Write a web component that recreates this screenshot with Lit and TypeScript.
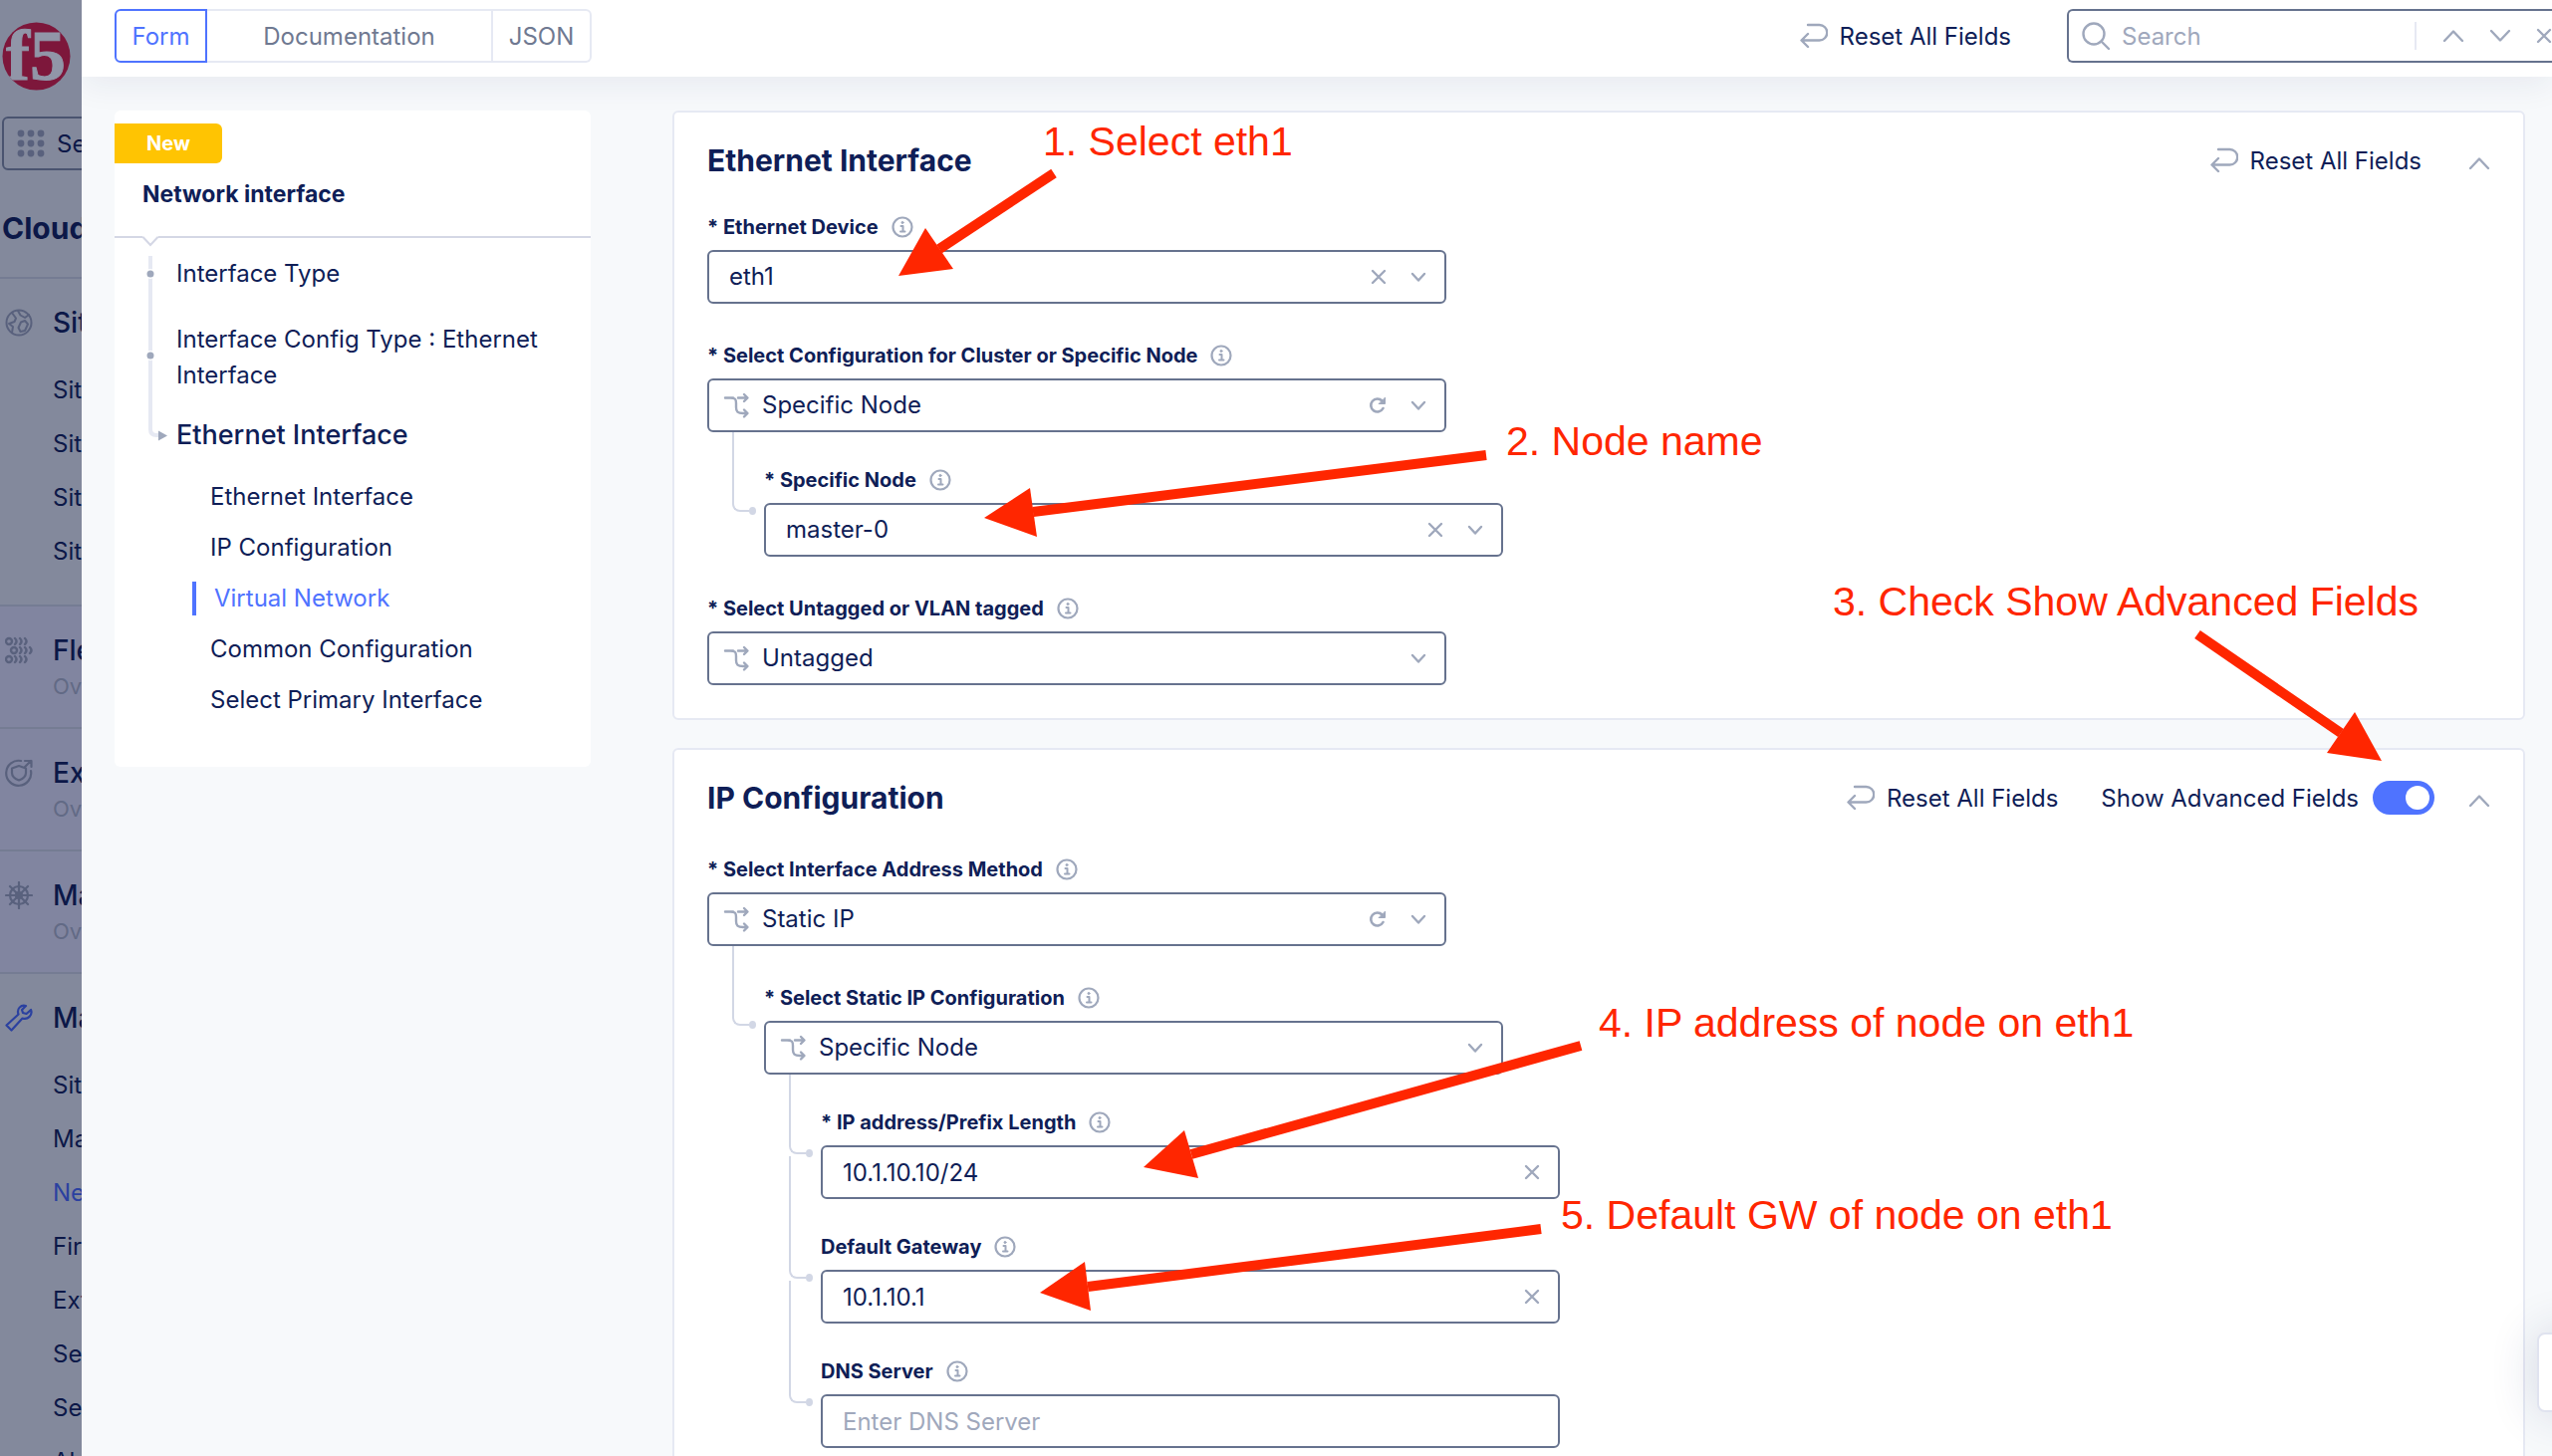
import { LitElement, html, css, svg, nothing } from "lit";
import { customElement, property } from "lit/decorators.js";
import { classMap } from "lit/directives/class-map.js";

const stroke = (size: number, body: unknown, width = 2) => html`<svg
  class="icon"
  width=${size}
  height=${size}
  viewBox="0 0 ${size} ${size}"
  fill="none"
  stroke="currentColor"
  stroke-width=${width}
  stroke-linecap="round"
  stroke-linejoin="round"
  aria-hidden="true"
>${body}</svg>`;

const icons = {
  reset: stroke(28, svg`<path d="M8 3h11.5a7.500 7.500 0 0 1 0 15.500H2M8 12L1.500 18.500L8 25"/>`, 2.4),
  search: stroke(30, svg`<circle cx="13" cy="13" r="10.500"/><path d="M20.500 20.500L28 28"/>`, 2.4),
  up: stroke(22, svg`<path d="M2 16L11 6.500L20 16"/>`, 2.4),
  down: stroke(22, svg`<path d="M2 6L11 15.500L20 6"/>`, 2.4),
  caret: stroke(16, svg`<path d="M2 5L8 11.500L14 5"/>`, 2.4),
  close: stroke(16, svg`<path d="M2 2L14 14M14 2L2 14"/>`, 2.4),
  branch: stroke(28, svg`<path d="M2 6.500H10M15 6.500H24M21 3L24.500 6.500L21 10M7 6.500C12.500 6.500 13 8 13 12V16C13 20.500 14.500 22 20 22H24M21 18.500L24.500 22L21 25.500"/>`, 2.4),
  refresh: stroke(18, svg`<path d="M14.500 12A6.500 6.500 0 1 1 13.500 4.500"/><path d="M16.500 1.500V7.500H10.500Z" fill="currentColor" stroke-width="1"/>`, 2.6),
  info: stroke(22, svg`<circle cx="11" cy="11" r="9.500"/><path d="M9.500 10H11.500V15.500M9 15.500H13.500" stroke-width="2"/><circle cx="11" cy="6.500" r="1" fill="currentColor" stroke-width="1"/>`, 2.2),
  apps: html`<svg class="icon" width="28" height="28" viewBox="0 0 28 28" fill="currentColor" aria-hidden="true">${[4, 14, 24].map((y) => [4, 14, 24].map((x) => svg`<circle cx=${x} cy=${y} r="3.400"/>`))}</svg>`,
  globe: stroke(28, svg`<circle cx="14" cy="14" r="12.500"/><path d="M7 4L11 9.500L9.500 13L4 15L8 18L7 24M13 2L15.500 6.500L20 9L24 6M16 13.500L20 12L23 15.500L20 22L15.500 23L13.500 19Z"/>`),
  fleet: stroke(28, svg`<circle cx="4" cy="5" r="3"/><circle cx="9" cy="14" r="3"/><circle cx="4" cy="23" r="3"/><path d="M10 2q3 3 0 6M15 2q3 3 0 6M20 2q3 3 0 6M15 11q3 3 0 6M20 11q3 3 0 6M25 11q3 3 0 6M10 20q3 3 0 6M15 20q3 3 0 6M20 20q3 3 0 6"/>`, 2.4),
  shield: stroke(28, svg`<path d="M16 2A12.500 12.500 0 1 0 26 12M20 2H26.500V8M26 2L20 8M14 7L21 9.500V14C21 18 18 20 14 21.500C10 20 7 18 7 14V9.500Z"/>`, 2.2),
  helm: stroke(28, svg`<circle cx="14" cy="14" r="9"/><circle cx="14" cy="14" r="3"/><path d="M14 1V27M1 14H27M5 5L23 23M23 5L5 23"/>`, 2.2),
  wrench: stroke(28, svg`<path d="M26 6L21.500 10L18 9L17 6L21 2C16 .500 11.500 5 13.500 10.500L1.500 21.500L6.500 26.500L17.500 14.500C23 16.500 28 11 26 6Z"/>`, 2.2),
};

const base = css`
  :host { box-sizing: border-box; }
  *, *::before, *::after { box-sizing: border-box; }
  svg.icon { display: block; flex: none; }
  button, input, select { font: inherit; color: inherit; background: none; border: 0; padding: 0; margin: 0; }
  button { display: flex; align-items: center; cursor: pointer; }
`;

@customElement("form-field")
class FormField extends LitElement {
  @property() label = "";
  @property() value = "";
  @property() hint = "";
  @property() kind: "select" | "choice" | "text" = "text";
  @property() action: "clear" | "refresh" | "" = "";

  static styles = [base, css`
    :host { display: block; width: 742px; }
    .head { display: flex; align-items: center; gap: 13px; height: 30px; margin-bottom: 8px; }
    label { font-size: 20px; font-weight: 700; line-height: 30px; color: #0f1e57; white-space: nowrap; }
    .head button, .box button, .caret { color: #9fa8bc; }
    .box { display: flex; align-items: center; height: 54px; border: 2px solid #66728e; border-radius: 6px; padding: 0 18px 0 20px; background: #fff; }
    .box.choice { padding-left: 14px; gap: 11px; }
    .box .icon { color: #9fa8bc; }
    select, input { flex: 1; min-width: 0; height: 50px; font-size: 24px; line-height: 32px; color: #0f1e57; appearance: none; outline: none; }
    input::placeholder { color: #a0a8bc; opacity: 1; }
    .tools { display: flex; align-items: center; gap: 24px; }
  `];

  render() {
    const control = this.kind === "text"
      ? html`<input id="control" type="text" .value=${this.value} placeholder=${this.hint} />`
      : html`<select id="control"><option>${this.value}</option></select>`;
    return html`
      <div class="head">
        <label for="control">${this.label}</label>
        <button type="button" aria-label="Info">${icons.info}</button>
      </div>
      <div class=${classMap({ box: true, choice: this.kind === "choice" })}>
        ${this.kind === "choice" ? icons.branch : nothing}
        ${control}
        <div class="tools">
          ${this.action === "clear" ? html`<button type="button" aria-label="Clear">${icons.close}</button>` : nothing}
          ${this.action === "refresh" ? html`<button type="button" aria-label="Restore">${icons.refresh}</button>` : nothing}
          ${this.kind === "text" ? nothing : html`<span class="caret">${icons.caret}</span>`}
        </div>
      </div>
    `;
  }
}

interface MenuGroup { title: string; icon: unknown; note?: string; items?: string[]; active?: boolean; }

const menu: MenuGroup[] = [
  { title: "Sites", icon: icons.globe, items: ["Sites", "Sites", "Sites", "Sites"] },
  { title: "Fleet", icon: icons.fleet, note: "Over" },
  { title: "Ext", icon: icons.shield, note: "Over" },
  { title: "Man", icon: icons.helm, note: "Over" },
  { title: "Man", icon: icons.wrench, active: true, items: ["Site", "Man", "Net", "Fire", "Ext", "Sec", "Sec", "Alert"] },
];

@customElement("side-menu")
class SideMenu extends LitElement {
  static styles = [base, css`
    :host { display: block; overflow: hidden; background: #83899c; color: #0c1848; white-space: nowrap; }
    .logo { display: block; margin: 22px 0 0 2px; }
    .service { display: flex; gap: 12px; height: 54px; width: 240px; margin: 26px 0 0 2px; padding-left: 13px; border: 2px solid #4a5470; border-radius: 6px; font-size: 24px; }
    .service .icon { color: #59617d; }
    h2 { margin: 38px 0 0 2px; height: 69px; font-size: 30px; font-weight: 700; line-height: 40px; color: #0c1848; }
    .group { border-top: 2px solid #757c93; padding: 26px 0 0 5px; height: 123px; }
    .group.plain { background: #8185a0; }
    .group.open { height: auto; padding-bottom: 26px; }
    .title { display: flex; align-items: center; gap: 20px; height: 36px; font-size: 28px; font-weight: 500; }
    .title .icon { color: #59617d; }
    .active .title .icon { color: #2b41a0; }
    .note { margin-left: 48px; font-size: 22px; line-height: 36px; color: #626a85; }
    ul { list-style: none; margin: 23px 0 0 48px; padding: 0; }
    li { height: 54px; }
    a { color: inherit; text-decoration: none; font-size: 24px; line-height: 54px; }
    a.current { color: #2b41a0; }
  `];

  render() {
    return html`
      <svg class="logo" width="69" height="69" viewBox="0 0 69 69" role="img" aria-label="f5">
        <defs><clipPath id="disc"><circle cx="34.500" cy="34.500" r="34"/></clipPath></defs>
        <circle cx="34.500" cy="34.500" r="34" fill="#7d173b"/>
        <g clip-path="url(#disc)">
          <text x="4" y="58" font-family="Liberation Serif, serif" font-weight="700" font-size="72" fill="#9196a8" stroke="#9196a8">f5</text>
        </g>
      </svg>
      <button type="button" class="service">${icons.apps}<span>Sel</span></button>
      <h2>Cloud</h2>
      <nav>
        ${menu.map((g) => html`
          <section class=${classMap({ group: true, open: !!g.items, plain: !g.items, active: !!g.active })}>
            <div class="title">${g.icon}<span>${g.title}</span></div>
            ${g.note ? html`<div class="note">${g.note}</div>` : nothing}
            ${g.items ? html`<ul>${g.items.map((i) => html`<li><a href="#" class=${i === "Net" ? "current" : ""}>${i}</a></li>`)}</ul>` : nothing}
          </section>`)}
      </nav>
    `;
  }
}

@customElement("form-outline")
class FormOutline extends LitElement {
  static styles = [base, css`
    :host { display: block; background: #fff; border-radius: 6px; color: #0f1e57; padding: 13px 0 50px; }
    .badge { display: inline-block; height: 40px; padding: 0 32px; border-radius: 0 6px 6px 0; background: #ffc402; color: #fff; font-size: 20px; font-weight: 700; line-height: 40px; vertical-align: top; }
    h2 { margin: 0; padding: 14px 28px 26px; border-bottom: 2px solid #d4d7e5; font-size: 23px; font-weight: 700; line-height: 34px; height: 75px; }
    .notch { display: block; margin: -2px 0 0 27px; }
    a { color: inherit; text-decoration: none; }
    .steps { display: flex; padding-left: 28px; }
    .rail { flex: none; width: 34px; }
    .list { display: flex; flex-direction: column; font-size: 24px; line-height: 36px; }
    .list > a { padding-right: 40px; margin-bottom: 30px; }
    .list > a.current { font-size: 27px; font-weight: 500; line-height: 40px; margin: -8px 0 25px; padding: 0; }
    .subs { display: flex; flex-direction: column; margin-left: 16px; }
    .subs a { line-height: 34px; margin-bottom: 17px; padding-left: 18px; }
    .subs a:last-child { margin: 0; }
    .subs a.on { color: #4f73ff; border-left: 4px solid #4f73ff; }
  `];

  render() {
    return html`
      <span class="badge">New</span>
      <h2>Network interface</h2>
      <svg class="notch" width="18" height="20" viewBox="0 0 18 20" aria-hidden="true">
        <path d="M1 0H17L9 9Z" fill="#fff"/><path d="M1.500 1L9 9L16.500 1" fill="none" stroke="#d4d7e5" stroke-width="2"/>
      </svg>
      <nav class="steps">
        <svg class="rail" width="34" height="190" viewBox="0 0 34 190" aria-hidden="true">
          <path d="M8 0V174Q8 180 14 180H18" fill="none" stroke="#e6e9f3" stroke-width="4"/>
          <circle cx="8" cy="18" r="5" fill="#fff"/><circle cx="8" cy="18" r="3.500" fill="#9fa8bc"/>
          <circle cx="8" cy="100" r="5" fill="#fff"/><circle cx="8" cy="100" r="3.500" fill="#9fa8bc"/>
          <path d="M16 175.500L25 180.500L16 185.500Z" fill="#9fa8bc"/>
        </svg>
        <div class="list">
          <a href="#">Interface Type</a>
          <a href="#">Interface Config Type : Ethernet Interface</a>
          <a href="#" class="current">Ethernet Interface</a>
          <div class="subs">
            <a href="#">Ethernet Interface</a>
            <a href="#">IP Configuration</a>
            <a href="#" class="on">Virtual Network</a>
            <a href="#">Common Configuration</a>
            <a href="#">Select Primary Interface</a>
          </div>
        </div>
      </nav>
    `;
  }
}

const notes = [
  { text: "1. Select eth1", x: 1047, y: 156, from: [1058, 174], tip: [902, 277], neck: [943, 250], head: [[929, 229], [957, 270]] },
  { text: "2. Node name", x: 1512, y: 457, from: [1492, 457], tip: [988, 520], neck: [1037, 514], head: [[1034, 490], [1041, 539]] },
  { text: "3. Check Show Advanced Fields", x: 1840, y: 618, from: [2206, 637], tip: [2391, 764], neck: [2350, 736], head: [[2364, 715], [2336, 756]] },
  { text: "4. IP address of node on eth1", x: 1605, y: 1041, from: [1587, 1050], tip: [1148, 1172], neck: [1196, 1159], head: [[1189, 1135], [1203, 1183]] },
  { text: "5. Default GW of node on eth1", x: 1567, y: 1234, from: [1547, 1234], tip: [1044, 1298], neck: [1092, 1292], head: [[1089, 1267], [1095, 1316]] },
];

@customElement("app-root")
class AppRoot extends LitElement {
  static styles = [base, css`
    :host { display: grid; grid-template-columns: 82px minmax(0, 1fr); height: 100vh; overflow: hidden; position: relative; font-family: Inter, "Liberation Sans", sans-serif; font-size: 24px; color: #0f1e57; background: #f7f9fb; }
    .panel { display: flex; flex-direction: column; min-width: 0; min-height: 0; overflow: hidden; }
    header { flex: none; position: relative; z-index: 1; display: flex; align-items: center; height: 77px; padding: 0 0 5px 33px; background: #fff; box-shadow: 0 8px 32px rgba(30, 45, 100, 0.07); }
    .tabs { display: flex; margin-right: auto; }
    .tabs button { height: 54px; justify-content: center; border: 2px solid #e6e9f3; border-left-width: 0; color: #6f7991; }
    .tabs .form { width: 93px; border: 2px solid #4f73ff; border-radius: 6px 0 0 6px; color: #4f73ff; }
    .tabs .docs { width: 287px; }
    .tabs .json { width: 99px; border-radius: 0 6px 6px 0; }
    .reset { gap: 12px; white-space: nowrap; }
    .reset .icon, .fold { color: #9fa8bc; }
    .search { display: flex; align-items: center; flex: none; width: 487px; height: 54px; margin-left: 56px; padding-left: 12px; border: 2px solid #66728e; border-right: 0; border-radius: 6px 0 0 6px; color: #9fa8bc; }
    .search input { width: 292px; margin-left: 11px; margin-right: auto; outline: none; color: #0f1e57; }
    .search input::placeholder { color: #a0a8bc; opacity: 1; }
    .moves { display: flex; flex: none; align-items: center; gap: 25px; height: 28px; padding-left: 26px; border-left: 2px solid #e6e9f3; }
    .body { display: flex; align-items: flex-start; gap: 82px; padding: 34px 27px 0 33px; }
    form-outline { flex: none; width: 478px; }
    .cards { flex: 1; min-width: 0; display: flex; flex-direction: column; gap: 28px; }
    .card { background: #fff; border: 2px solid #e6e9f3; border-radius: 6px; padding: 29px 33px 33px; }
    .top { display: flex; align-items: center; height: 38px; margin-bottom: 33px; }
    .top.wide { margin-bottom: 38px; }
    h3 { margin: 0 auto 0 0; font-size: 30px; font-weight: 700; line-height: 38px; }
    .fold { margin-left: 47px; padding-top: 6px; }
    .switch { display: flex; align-items: center; gap: 14px; margin-left: 43px; white-space: nowrap; }
    .switch + .fold { margin-left: 34px; }
    .switch input { appearance: none; display: flex; align-items: center; justify-content: flex-end; width: 62px; height: 34px; padding: 5px; border-radius: 17px; background: #4f73ff; }
    .switch input::before { content: ""; width: 24px; height: 24px; border-radius: 50%; background: #fff; }
    .switch input:not(:checked) { background: #9fa8bc; justify-content: flex-start; }
    .next { margin-top: 37px; }
    .nested { display: flex; align-items: stretch; padding-left: 25px; }
    .elbow { flex: none; width: 17px; margin-bottom: 45px; border: solid #d2d7e5; border-width: 0 0 2px 2px; border-bottom-left-radius: 8px; }
    .dot { flex: none; align-self: flex-end; width: 7px; height: 8px; margin: 0 8px 42px 0; border-radius: 50%; background: #d2d7e5; }
    .nested form-field { margin-top: 33px; }
    .nested.loose form-field { margin-top: 37px; }
    .nested.loose .elbow { margin-bottom: 49px; }
    .nested.loose .dot { margin-bottom: 46px; }
    .nested.again .elbow { margin-top: -43px; }
    .level { padding-left: 57px; }
    .helper { position: absolute; right: -60px; top: 1338px; width: 75px; height: 80px; border: 2px solid #e0e3ef; border-radius: 8px; background: #fff; box-shadow: 0 0 48px rgba(30, 45, 100, 0.16); z-index: 2; }
    .notes { position: absolute; inset: 0; width: 100%; height: 100%; z-index: 3; pointer-events: none; fill: #ff2600; font-family: "Liberation Sans", Arial, sans-serif; font-size: 41px; }
    .notes line { stroke: #ff2600; stroke-width: 10px; }
  `];

  private resetButton() {
    return html`<button type="button" class="reset">${icons.reset}<span>Reset All Fields</span></button>`;
  }

  private foldButton() {
    return html`<button type="button" class="fold" aria-label="Collapse section">${icons.up}</button>`;
  }

  private nested(field: unknown, mode: "" | "loose" | "again" = "") {
    return html`<div class="nested ${mode}"><i class="elbow"></i><i class="dot"></i>${field}</div>`;
  }

  render() {
    return html`
      <side-menu></side-menu>
      <div class="panel">
        <header>
          <div class="tabs">
            <button type="button" class="form">Form</button>
            <button type="button" class="docs">Documentation</button>
            <button type="button" class="json">JSON</button>
          </div>
          ${this.resetButton()}
          <div class="search">
            ${icons.search}
            <input type="text" placeholder="Search" aria-label="Search" />
            <div class="moves">
              <button type="button" aria-label="Previous match">${icons.up}</button>
              <button type="button" aria-label="Next match">${icons.down}</button>
              <button type="button" aria-label="Close search">${icons.close}</button>
            </div>
          </div>
        </header>
        <div class="body">
          <form-outline></form-outline>
          <form class="cards">
            <section class="card">
              <div class="top"><h3>Ethernet Interface</h3>${this.resetButton()}${this.foldButton()}</div>
              <form-field kind="select" label="* Ethernet Device" value="eth1" action="clear"></form-field>
              <form-field class="next" kind="choice" label="* Select Configuration for Cluster or Specific Node" value="Specific Node" action="refresh"></form-field>
              ${this.nested(html`<form-field kind="select" label="* Specific Node" value="master-0" action="clear"></form-field>`)}
              <form-field class="next" kind="choice" label="* Select Untagged or VLAN tagged" value="Untagged"></form-field>
            </section>
            <section class="card">
              <div class="top wide">
                <h3>IP Configuration</h3>
                ${this.resetButton()}
                <label class="switch">Show Advanced Fields<input type="checkbox" checked /></label>
                ${this.foldButton()}
              </div>
              <form-field kind="choice" label="* Select Interface Address Method" value="Static IP" action="refresh"></form-field>
              ${this.nested(html`<form-field kind="choice" label="* Select Static IP Configuration" value="Specific Node"></form-field>`, "loose")}
              <div class="level">
                ${this.nested(html`<form-field label="* IP address/Prefix Length" value="10.1.10.10/24" action="clear"></form-field>`)}
                ${this.nested(html`<form-field label="Default Gateway" value="10.1.10.1" action="clear"></form-field>`, "again")}
                ${this.nested(html`<form-field label="DNS Server" hint="Enter DNS Server"></form-field>`, "again")}
              </div>
            </section>
          </form>
        </div>
      </div>
      <div class="helper"></div>
      <svg class="notes">
        ${notes.map((n) => svg`
          <text x=${n.x} y=${n.y}>${n.text}</text>
          <line x1=${n.from[0]} y1=${n.from[1]} x2=${n.neck[0]} y2=${n.neck[1]} />
          <polygon points=${[n.tip, ...n.head].map((p) => p.join(",")).join(" ")} />`)}
      </svg>
    `;
  }
}
